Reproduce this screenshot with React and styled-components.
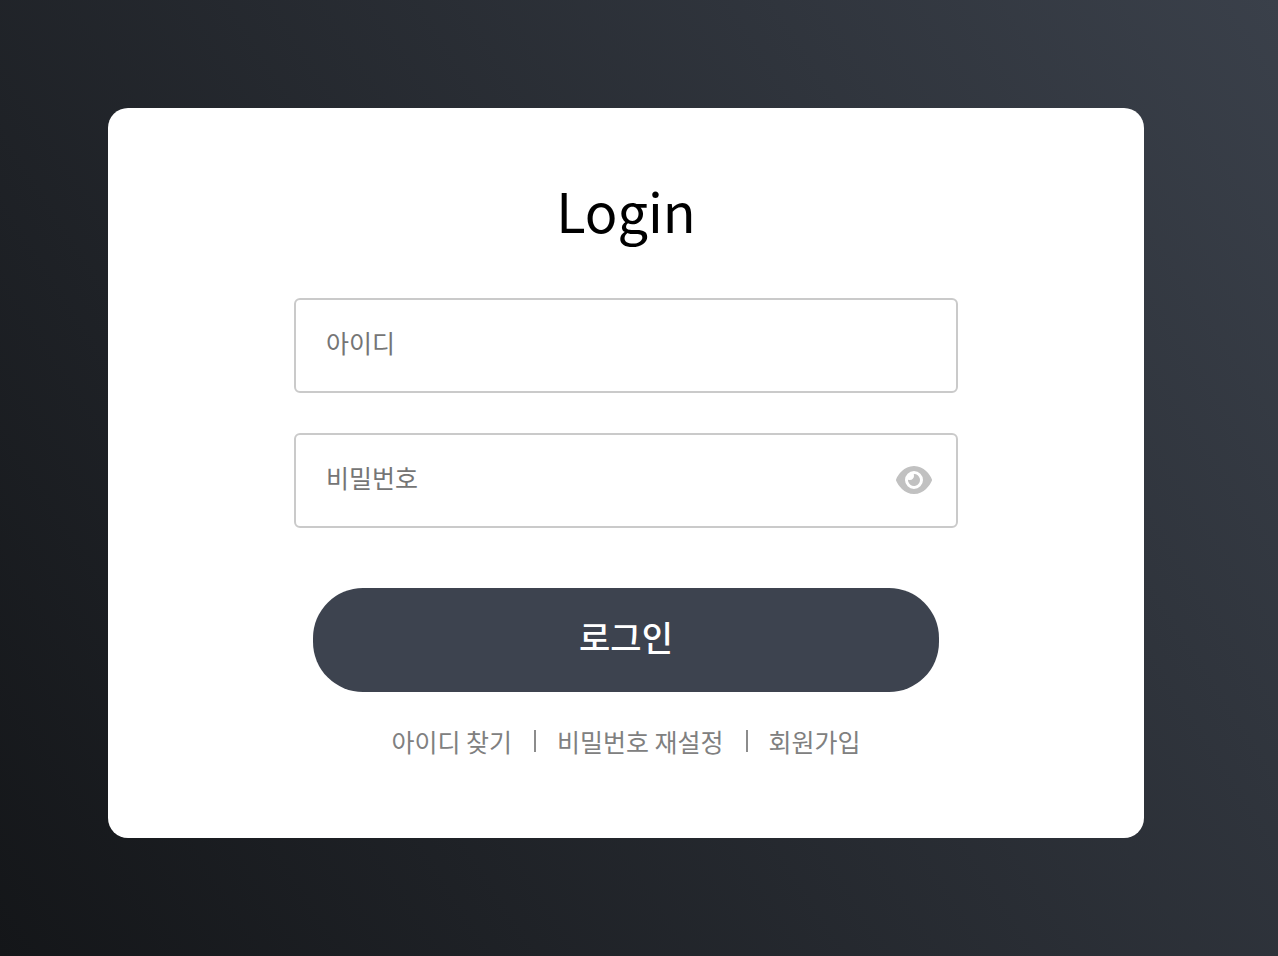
import React, { useState } from "react";
import styled, { createGlobalStyle } from "styled-components";
import { FaEye } from "react-icons/fa6";

const GlobalStyle = createGlobalStyle`
  * {
    box-sizing: border-box;
  }
  body {
    margin: 0;
    font-family: "Noto Sans CJK KR", sans-serif;
  }
  button, input {
    font-family: inherit;
  }
`;

const Container = styled.div`
  min-height: 100vh;
  padding: 108px 134px 118px 108px;
  background: linear-gradient(57deg, #141619, #3a404a);
`;

const Card = styled.main`
  display: flex;
  flex-direction: column;
  align-items: center;
  padding: 62px 24px 79px;
  border-radius: 20px;
  background-color: white;
`;

const Title = styled.h1`
  margin: 0 0 48px;
  font-size: 54px;
  font-weight: 400;
  line-height: 80px;
  color: black;
`;

const Form = styled.form`
  display: flex;
  flex-direction: column;
  align-items: center;
  gap: 40px;
  width: 100%;
  max-width: 664px;
`;

const Field = styled.div`
  display: flex;
  align-items: center;
  width: 100%;
  height: 95px;
  padding: 0 24px 8px 30px;
  border: 2px solid #cacaca;
  border-radius: 6px;
`;

const Input = styled.input`
  flex: 1;
  min-width: 0;
  padding: 0;
  border: none;
  outline: none;
  background: none;
  font-size: 25px;
  line-height: 36px;

  &::placeholder {
    color: #757575;
  }
`;

const EyeButton = styled.button`
  display: flex;
  padding: 6px 0 0;
  border: none;
  background: none;
  color: #c1c1c1;
  font-size: 36px;
  cursor: pointer;
`;

const LoginButton = styled.button`
  width: 100%;
  max-width: 626px;
  height: 104px;
  margin-top: 20px;
  padding: 0 0 8px;
  border: none;
  border-radius: 50px;
  background-color: #3d434f;
  color: white;
  font-size: 34px;
  font-weight: 500;
  cursor: pointer;
`;

const Links = styled.nav`
  display: flex;
  align-items: center;
  justify-content: center;
  margin-top: 31px;
  font-size: 25px;
  line-height: 36px;
`;

const Link = styled.a`
  color: #808080;
  text-decoration: none;

  & + & {
    display: flex;
    align-items: center;
  }

  & + &::before {
    content: "";
    width: 2px;
    height: 22px;
    margin: 0 21px 0 22px;
    background-color: #8c8c8c;
  }
`;

export default function Login() {
  const [visible, setVisible] = useState(false);

  return (
    <>
      <GlobalStyle />
      <Container>
        <Card>
          <Title>Login</Title>
          <Form onSubmit={(e) => e.preventDefault()}>
            <Field>
              <Input type="text" placeholder="아이디" aria-label="아이디" />
            </Field>
            <Field>
              <Input
                type={visible ? "text" : "password"}
                placeholder="비밀번호"
                aria-label="비밀번호"
              />
              <EyeButton
                type="button"
                aria-label="비밀번호 보기"
                onClick={() => setVisible(!visible)}
              >
                <FaEye />
              </EyeButton>
            </Field>
            <LoginButton type="submit">로그인</LoginButton>
          </Form>
          <Links>
            <Link href="#find-id">아이디 찾기</Link>
            <Link href="#reset-password">비밀번호 재설정</Link>
            <Link href="#join">회원가입</Link>
          </Links>
        </Card>
      </Container>
    </>
  );
}
